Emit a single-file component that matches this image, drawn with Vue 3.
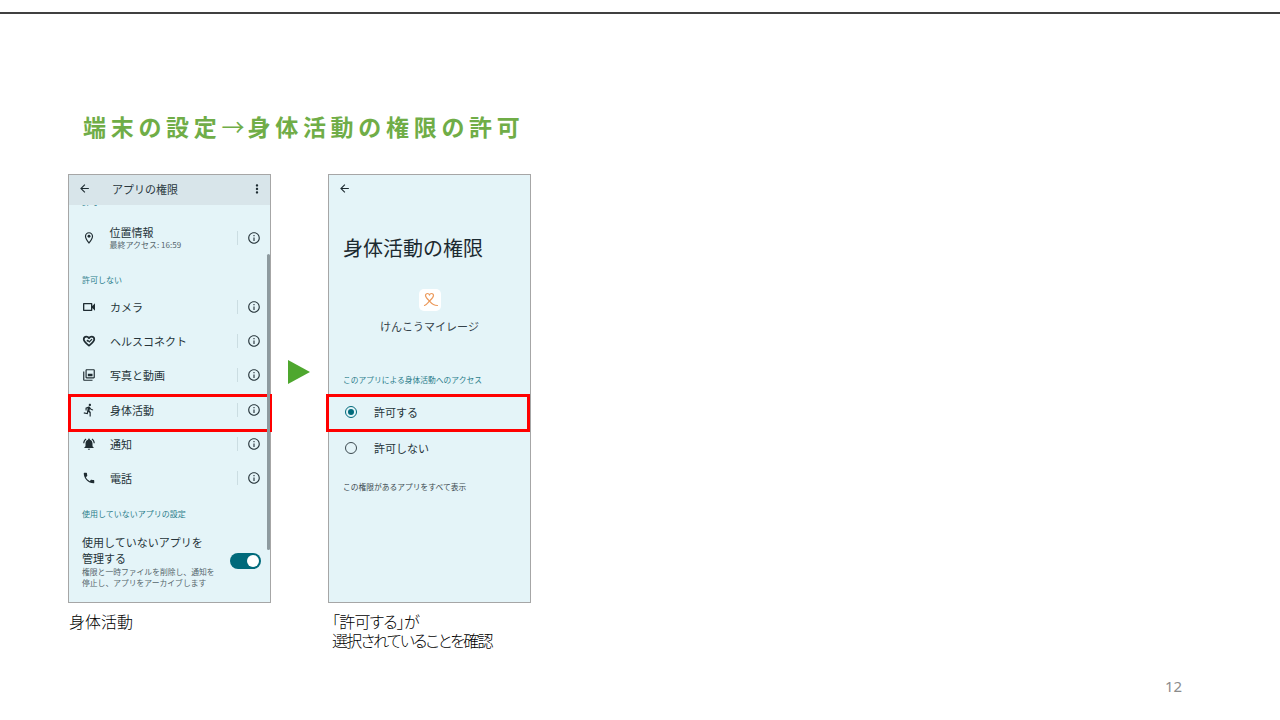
<script setup>
const icons = {
  camera: 'M15 8v8H5V8h10m1-2H4c-.55 0-1 .45-1 1v10c0 .55.45 1 1 1h12c.55 0 1-.45 1-1v-3.5l4 4v-11l-4 4V7c0-.55-.45-1-1-1z',
  photo: 'M20 4v12H8V4h12m0-2H8c-1.1 0-2 .9-2 2v12c0 1.1.9 2 2 2h12c1.100 0 2-.9 2-2V4c0-1.100-.9-2-2-2zM4 6H2v14c0 1.100.9 2 2 2h14v-2H4V6zm6 4h8v4h-8z',
  run: 'M13.49 5.48c1.1 0 2-.9 2-2s-.9-2-2-2-2 .9-2 2 .9 2 2 2zm-3.6 13.9l1-4.4 2.1 2v6h2v-7.5l-2.1-2 .6-3c1.3 1.5 3.3 2.5 5.5 2.500v-2c-1.900 0-3.500-1-4.300-2.400l-1-1.600c-.4-.6-1-1-1.700-1-.3 0-.5.1-.8.1l-5.200 2.200v4.700h2v-3.400l1.800-.7-1.600 8.100-4.900-1-.4 2 7 1.400z',
  bell: 'M7.58 4.08L6.15 2.65C3.75 4.48 2.17 7.3 2.03 10.5h2c.15-2.65 1.51-4.97 3.55-6.42zm12.39 6.42h2c-.15-3.2-1.73-6.02-4.12-7.85l-1.42 1.43c2.02 1.45 3.39 3.77 3.54 6.42zM18 11c0-3.07-1.64-5.64-4.5-6.32V4c0-.83-.67-1.5-1.5-1.5s-1.500.67-1.500 1.500v.68C7.630 5.360 6 7.920 6 11v5l-2 2v1h16v-1l-2-2v-5zm-6 11c.14 0 .27-.01.4-.04.65-.14 1.180-.58 1.440-1.180.1-.24.15-.5.15-.78h-4c.01 1.100.9 2 2.010 2z',
  phone: 'M6.62 10.79c1.44 2.83 3.76 5.14 6.59 6.59l2.2-2.2c.27-.27.67-.36 1.02-.24 1.12.37 2.33.57 3.57.57.55 0 1 .45 1 1V20c0 .55-.45 1-1 1-9.39 0-17-7.61-17-17 0-.55.45-1 1-1h3.5c.55 0 1 .45 1 1 0 1.25.2 2.45.57 3.57.11.35.03.74-.25 1.02l-2.2 2.2z',
}
const info = 'M11 7h2v2h-2zm0 4h2v6h-2zm1-9C6.48 2 2 6.48 2 12s4.48 10 10 10 10-4.48 10-10S17.52 2 12 2zm0 18c-4.41 0-8-3.59-8-8s3.59-8 8-8 8 3.59 8 8-3.59 8-8 8z'
const back = 'M20 11H7.83l5.59-5.59L12 4l-8 8 8 8 1.41-1.41L7.83 13H20v-2z'
const rows = [
  { label: 'カメラ', icon: 'camera' },
  { label: 'ヘルスコネクト', icon: 'health' },
  { label: '写真と動画', icon: 'photo' },
  { label: '身体活動', icon: 'run', marked: true },
  { label: '通知', icon: 'bell' },
  { label: '電話', icon: 'phone' },
]
</script>

<template>
  <div class="slide">
    <div class="rule"></div>
    <h1 class="title">端末の設定<span class="arrow">→</span>身体活動の権限の許可</h1>
    <div class="shots">
      <div class="col">
        <div class="phone">
          <div class="appbar">
            <svg class="back" viewBox="0 0 24 24"><path :d="back" /></svg>
            <span class="appbar-title">アプリの権限</span>
            <svg class="more" viewBox="0 0 24 24"><path d="M12 8c1.100 0 2-.9 2-2s-.9-2-2-2-2 .9-2 2 .9 2 2 2zm0 2c-1.100 0-2 .9-2 2s.9 2 2 2 2-.9 2-2-.9-2-2-2zm0 6c-1.100 0-2 .9-2 2s.9 2 2 2 2-.9 2-2-.9-2-2-2z" /></svg>
          </div>
          <div class="clipped"><span>許可</span></div>
          <div class="row loc">
            <svg class="ic" viewBox="0 0 24 24">
              <path d="M12 2C8.130 2 5 5.130 5 9c0 5.250 7 13 7 13s7-7.750 7-13c0-3.870-3.130-7-7-7zM7 9c0-2.760 2.240-5 5-5s5 2.240 5 5c0 2.880-2.880 7.190-5 9.880C9.920 16.210 7 11.850 7 9z" />
              <circle cx="12" cy="9" r="2.500" />
            </svg>
            <div class="row-text shift">
              <div class="loc-title">位置情報</div>
              <div class="loc-sub">最終アクセス: 16:59</div>
            </div>
            <span class="sep"></span>
            <svg class="info" viewBox="0 0 24 24"><path :d="info" /></svg>
          </div>
          <div class="section s1">許可しない</div>
          <div v-for="r in rows" :key="r.label" class="row">
            <svg v-if="r.icon === 'health'" class="ic" viewBox="0 0 24 24">
              <path d="M12 20C7 16 3 13 3 9c0-2.800 2.200-4.500 4.500-4.500 1.800 0 3.500 1 4.500 2.700 1-1.700 2.700-2.700 4.500-2.700C18.800 4.500 21 6.200 21 9c0 4-4 7-9 11z" fill="none" stroke="#1f2c32" stroke-width="3" stroke-linejoin="round" />
              <path d="M7.500 11.500L10 9.500l2.500 2.500 4-4 1.500 1.500-5.500 5.500-2.500-2.500-1 1z" />
            </svg>
            <svg v-else class="ic" :class="{ 'ic-wide': r.icon === 'camera' }" viewBox="0 0 24 24"><path :d="icons[r.icon]" /></svg>
            <div class="row-text">{{ r.label }}</div>
            <span class="sep"></span>
            <svg class="info" viewBox="0 0 24 24"><path :d="info" /></svg>
            <span v-if="r.marked" class="mark mark-a"></span>
          </div>
          <div class="section s2">使用していないアプリの設定</div>
          <div class="unused">
            <div class="unused-text">
              <div class="unused-title">使用していないアプリを<br />管理する</div>
              <div class="unused-sub">権限と一時ファイルを削除し、通知を<br />停止し、アプリをアーカイブします</div>
            </div>
            <span class="toggle"><span class="thumb"></span></span>
          </div>
          <span class="scrollbar"></span>
        </div>
        <p class="caption">身体活動</p>
      </div>

      <div class="between">
        <svg width="22" height="24" viewBox="0 0 22 24"><path d="M0 0L22 12L0 24z" fill="#4ea72e" /></svg>
      </div>

      <div class="col">
        <div class="phone">
          <div class="bar2">
            <svg class="back" viewBox="0 0 24 24"><path :d="back" /></svg>
          </div>
          <div class="big">身体活動の権限</div>
          <div class="app-ic">
            <svg width="20" height="20" viewBox="0 0 20 20" fill="none" stroke="#ec9a5c" stroke-width="1.200" stroke-linecap="round" stroke-linejoin="round">
              <path d="M9.500 11C8 9.600 5.500 7.800 5.500 5.600 5.500 4.300 6.400 3.500 7.500 3.500 8.500 3.500 9.200 4.200 9.500 5.200 9.800 4.200 10.500 3.500 11.500 3.500 12.600 3.500 13.500 4.300 13.500 5.600 13.500 7.800 11 9.600 9.500 11Z" />
              <path d="M9.500 11C8 12.500 6.800 14.500 4.500 15.500M9.500 11C11 12.800 13 15.600 17.500 15.500" />
            </svg>
          </div>
          <div class="app-name">けんこうマイレージ</div>
          <div class="section s3">このアプリによる身体活動へのアクセス</div>
          <div class="radio-row">
            <span class="radio on"><span class="dot"></span></span>
            <span>許可する</span>
            <span class="mark mark-b"></span>
          </div>
          <div class="radio-row">
            <span class="radio"></span>
            <span>許可しない</span>
          </div>
          <div class="all">この権限があるアプリをすべて表示</div>
        </div>
        <div class="caption cap2">
          <div class="cap-a">「許可する」が</div>
          <div class="cap-b">選択されていることを確認</div>
        </div>
      </div>
    </div>
    <div class="pageno">12</div>
  </div>
</template>

<style>
html, body { margin: 0; background: #fff; }
</style>

<style scoped>
.slide {
  width: 1280px;
  height: 720px;
  overflow: hidden;
  background: #fff;
  font-family: "Noto Sans CJK JP", "Noto Sans", sans-serif;
  color: #1c2a30;
}
.rule { margin-top: 12px; height: 2px; background: #404040; }
.title {
  margin: 95px 0 0 83px;
  height: 65px;
  font-size: 23px;
  line-height: 34px;
  font-weight: 700;
  letter-spacing: 4.700px;
  color: #70ad47;
  white-space: nowrap;
}
.arrow { font-weight: 400; letter-spacing: 3px; }
.shots { display: flex; margin-left: 68px; align-items: flex-start; }
.col { width: 203px; }
.between {
  width: 57px;
  padding: 186px 0 0 17px;
  box-sizing: border-box;
}
.phone {
  position: relative;
  box-sizing: border-box;
  width: 203px;
  height: 429px;
  border: 1px solid #a6a6a6;
  background: #e4f4f8;
}
.appbar {
  box-sizing: border-box;
  height: 30px;
  background: #d8e5ea;
  display: flex;
  align-items: center;
  padding: 0 6px 3px 9px;
}
.back { width: 13px; height: 13px; fill: #1c2a30; flex: none; }
.appbar-title { margin-left: 21px; font-size: 11px; flex: 1; color: #2a383e; }
.more { width: 14px; height: 14px; fill: #1c2a30; }
.clipped { height: 4px; overflow: hidden; position: relative; }
.clipped span {
  position: absolute; left: 13px; top: -8px;
  font-size: 8px; line-height: 10px; color: #2b7d8b;
}
.row {
  position: relative;
  height: 34.2px;
  display: flex;
  align-items: center;
  font-size: 11px;
  padding-left: 13px;
  padding-right: 9px;
}
.loc { height: 58px; }
.ic { width: 14px; height: 14px; fill: #1f2c32; flex: none; }
.ic-wide { width: 16px; height: 16px; margin: 0 -1px; }
.row-text { margin-left: 14px; flex: 1; color: #26343a; white-space: nowrap; }
.shift { margin-left: 13.500px; }
.loc-title { font-size: 11px; line-height: 14px; }
.loc-sub { font-size: 8px; line-height: 12px; color: #55666c; }
.sep { width: 1px; height: 14px; background: #cbdde2; margin-right: 9px; }
.info { width: 14px; height: 14px; fill: #2a383e; flex: none; }
.section { font-size: 8px; color: #2b7d8b; white-space: nowrap; }
.s1 { height: 23px; line-height: 23px; padding: 1px 0 0 13px; box-sizing: border-box; }
.s2 { height: 38.600px; line-height: 37px; padding-left: 13px; }
.unused { display: flex; padding-left: 13px; position: relative; }
.unused-text { flex: 1; }
.unused-title { font-size: 11px; line-height: 16px; color: #26343a; white-space: nowrap; }
.unused-sub { font-size: 7.800px; line-height: 11.500px; color: #55666c; white-space: nowrap; }
.toggle {
  position: absolute;
  left: 161px;
  top: 19px;
  width: 31px;
  height: 16px;
  border-radius: 8px;
  background: #016a7b;
}
.thumb {
  position: absolute;
  right: 2px;
  top: 2px;
  width: 12px;
  height: 12px;
  border-radius: 50%;
  background: #fff;
}
.scrollbar {
  position: absolute;
  left: 197.500px;
  top: 79px;
  width: 3px;
  height: 296px;
  border-radius: 2px;
  background: #8d9a9f;
}
.mark {
  position: absolute;
  border: 3px solid #f00;
  box-sizing: border-box;
  height: 38px;
  width: 204px;
  pointer-events: none;
}
.mark-a { left: -1px; top: 1px; }
.mark-b { left: -3px; top: -0.500px; }
.bar2 { height: 27px; display: flex; align-items: center; padding-left: 9px; }
.big { margin: 31px 0 0 14px; font-size: 20px; line-height: 30px; color: #1c2a30; }
.app-ic {
  margin: 26px auto 0;
  width: 22px;
  height: 22px;
  border-radius: 5px;
  background: #fff;
  display: flex;
  align-items: center;
  justify-content: center;
}
.app-name { margin-top: 7px; text-align: center; font-size: 11px; line-height: 16px; color: #34424a; }
.s3 {
  margin: 40px 0 0 14px;
  font-size: 7.750px;
  line-height: 12px;
}
.radio-row {
  position: relative;
  height: 36px;
  display: flex;
  align-items: center;
  font-size: 11px;
  padding-left: 16px;
  gap: 17px;
  color: #26343a;
}
.s3 + .radio-row { margin-top: 8px; }
.radio {
  box-sizing: border-box;
  width: 12px;
  height: 12px;
  border: 1.500px solid #3c4a50;
  border-radius: 50%;
  display: flex;
  align-items: center;
  justify-content: center;
  flex: none;
}
.radio.on { border-color: #016a7b; }
.dot { width: 6px; height: 6px; border-radius: 50%; background: #016a7b; }
.all { margin: 15px 0 0 14px; font-size: 7.750px; line-height: 12px; color: #3c4a50; white-space: nowrap; }
.caption {
  margin: 8.500px 0 0 1px;
  font-size: 16px;
  line-height: 19px;
  color: #000;
  font-weight: 300;
  white-space: nowrap;
}
.cap2 { margin-left: 4px; font-feature-settings: "palt"; }
.cap-a { letter-spacing: -0.800px; }
.cap-b { letter-spacing: -1.750px; }
.pageno {
  margin: 26px 0 0 1165px;
  font-family: "Noto Sans", sans-serif;
  font-size: 15px;
  line-height: 20px;
  color: #8c8c8c;
}
</style>
